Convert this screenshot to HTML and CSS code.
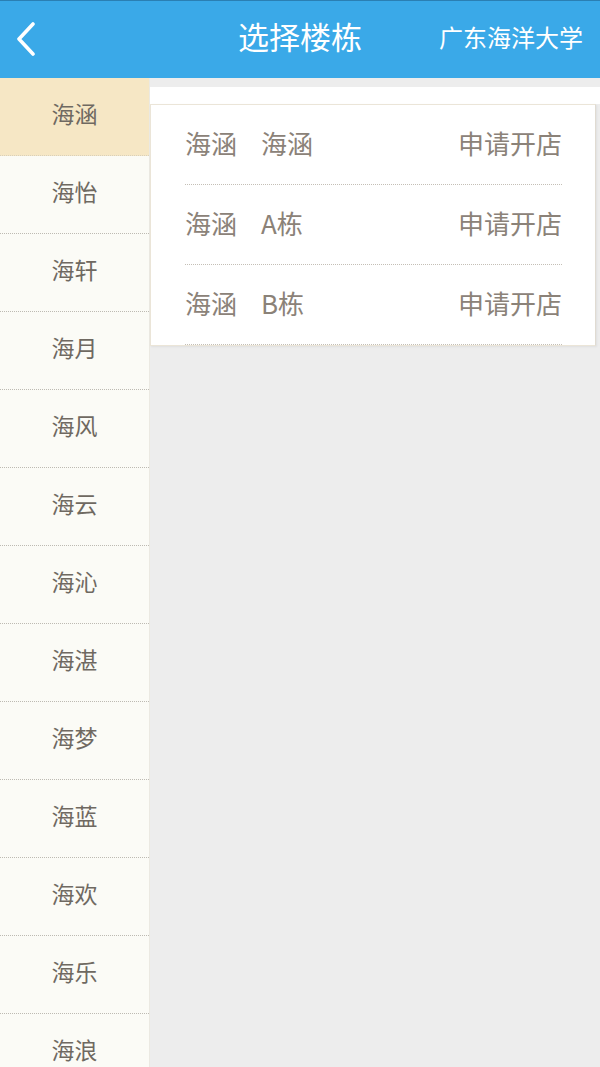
FILE: index.html
```html
<!DOCTYPE html>
<html lang="zh">
<head>
<meta charset="utf-8">
<title>选择楼栋</title>
<link rel="stylesheet" href="styles.css">
</head>
<body>
<div class="app">
  <header class="topbar">
    <span class="back">
      <svg width="20" height="34" viewBox="0 0 20 34"><path d="M17 2 L3 17 L17 32" fill="none" stroke="#fff" stroke-width="3.6" stroke-linecap="round" stroke-linejoin="round"/></svg>
    </span>
    <h1 class="title">选择楼栋</h1>
    <span class="school">广东海洋大学</span>
  </header>
  <div class="main">
    <nav class="sidebar">
      <div class="side-item active">海涵</div>
      <div class="side-item">海怡</div>
      <div class="side-item">海轩</div>
      <div class="side-item">海月</div>
      <div class="side-item">海风</div>
      <div class="side-item">海云</div>
      <div class="side-item">海沁</div>
      <div class="side-item">海湛</div>
      <div class="side-item">海梦</div>
      <div class="side-item">海蓝</div>
      <div class="side-item">海欢</div>
      <div class="side-item">海乐</div>
      <div class="side-item">海浪</div>
    </nav>
    <section class="content">
      <div class="strip"></div>
      <div class="card">
        <div class="row"><span class="name"><span class="area">海涵</span>海涵</span><span class="action">申请开店</span></div>
        <div class="row"><span class="name"><span class="area">海涵</span>A栋</span><span class="action">申请开店</span></div>
        <div class="row"><span class="name"><span class="area">海涵</span>B栋</span><span class="action">申请开店</span></div>
      </div>
    </section>
  </div>
</div>
</body>
</html>
```
FILE: styles.css
```css
html, body {
  margin: 0;
  padding: 0;
}
body {
  font-family: "Noto Sans CJK SC", "Noto Sans", sans-serif;
  background: #ededed;
}
.app {
  width: 600px;
  height: 1067px;
  overflow: hidden;
  display: flex;
  flex-direction: column;
}
.topbar {
  height: 77px;
  border-top: 1px solid #2a7fb3;
  background: #3aa9e8;
  display: flex;
  align-items: center;
  position: relative;
  flex-shrink: 0;
}
.back {
  display: flex;
  margin-left: 16px;
  margin-top: -2px;
}
.title {
  position: absolute;
  left: 0;
  right: 0;
  margin: 0;
  text-align: center;
  font-size: 31px;
  font-weight: normal;
  color: #fff;
  line-height: 77px;
  top: -4px;
  pointer-events: none;
}
.school {
  margin-left: auto;
  margin-right: 17px;
  color: #fff;
  font-size: 24px;
  margin-top: -6px;
}
.main {
  flex: 1;
  display: flex;
  min-height: 0;
}
.sidebar {
  width: 149px;
  border-right: 1px solid #ebe9e2;
  background: #fbfbf6;
  flex-shrink: 0;
}
.side-item {
  height: 69px;
  padding-bottom: 8px;
  border-bottom: 1px dotted #bdbab2;
  display: flex;
  align-items: center;
  justify-content: center;
  font-size: 23px;
  color: #6f6961;
}
.side-item.active {
  background: #f6e7c5;
  border-bottom-color: #d9d0bb;
}
.content {
  flex: 1;
  padding-top: 9px;
}
.strip {
  height: 17px;
  background: #fff;
}
.card {
  margin-right: 4px;
  background: #fff;
  border: 1px solid #ebe5d8;
  border-right-color: #e0dbd2;
  box-shadow: 1px 1px 2px rgba(0,0,0,0.06);
  padding: 0 33px 0 34px;
}
.row {
  height: 75px;
  padding-bottom: 4px;
  border-bottom: 1px dotted #c4bfb6;
  display: flex;
  align-items: center;
  justify-content: space-between;
  font-size: 26px;
  color: #8b8278;
}
.area {
  margin-right: 24px;
}
```
